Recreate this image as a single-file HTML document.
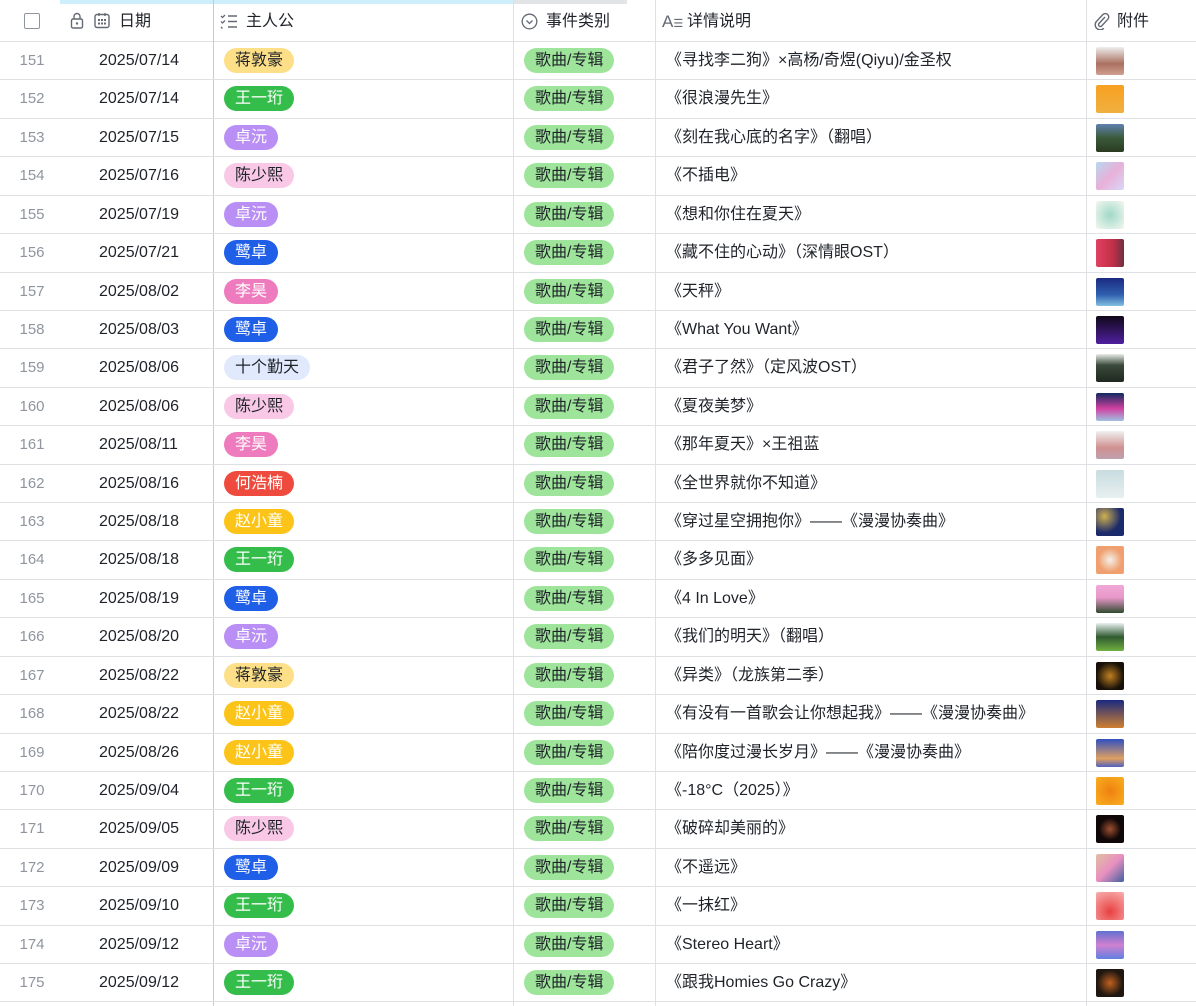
<!DOCTYPE html>
<html><head><meta charset="utf-8"><style>
*{margin:0;padding:0;box-sizing:border-box}
body{width:1196px;height:1006px;overflow:hidden;background:#fff;font-family:"Liberation Sans","Noto Sans CJK SC",sans-serif;color:#1f2329;font-size:16px;position:relative}
.top1{position:absolute;left:60px;top:0;width:453px;height:4px;background:#cdeefb}
.top2{position:absolute;left:513px;top:0;width:114px;height:4px;background:#e3e4e6}
.hdr{position:absolute;left:0;top:0;width:1196px;height:42px;border-bottom:1px solid #dee0e3}
.vl{position:absolute;top:0;height:1006px;width:1px;background:#dee0e3}
.row{position:absolute;left:0;width:1196px;height:38.42px;border-bottom:1px solid #dee0e3}
.n{position:absolute;left:0;width:64px;text-align:center;color:#8f959e;top:0;line-height:37px;font-size:15px}
.d{position:absolute;left:99px;top:0;line-height:37px}
.t{position:absolute;top:6px;height:25px;line-height:25px;border-radius:13px;padding:0 11px;font-size:16px}
.c{left:524px;background:#9ee59b;color:#1f2329}
.p{left:224px}
.x{position:absolute;left:666px;top:0;line-height:37px}
.im{position:absolute;left:1096px;top:5px;width:28px;height:28px;border-radius:2px}
.h{position:absolute;top:2px;line-height:40px;font-size:16px;color:#1f2329}
</style></head><body>
<div class="top1"></div><div class="top2"></div>
<div class="hdr">
<div style="position:absolute;left:24px;top:13px;width:16px;height:16px;border:1.5px solid #8f959e;border-radius:2px"></div>
<svg style="position:absolute;left:70px;top:12px" width="14" height="18" viewBox="0 0 14 18"><rect x="1.5" y="7" width="11" height="9" rx="1.5" fill="none" stroke="#646a73" stroke-width="1.4"/><path d="M4 7V4.5a3 3 0 0 1 6 0V7" fill="none" stroke="#646a73" stroke-width="1.4"/><circle cx="7" cy="11.5" r="1.2" fill="#646a73"/></svg>
<svg style="position:absolute;left:94px;top:12px" width="16" height="17" viewBox="0 0 16 17"><rect x="1" y="2.5" width="14" height="13" rx="2" fill="none" stroke="#646a73" stroke-width="1.4"/><path d="M5 1v3M11 1v3" stroke="#646a73" stroke-width="1.4"/><g fill="#646a73"><rect x="4" y="7" width="2" height="2"/><rect x="7" y="7" width="2" height="2"/><rect x="10" y="7" width="2" height="2"/><rect x="4" y="10.5" width="2" height="2"/><rect x="7" y="10.5" width="2" height="2"/><rect x="10" y="10.5" width="2" height="2"/></g></svg>
<div class="h" style="left:119px">日期</div>
<svg style="position:absolute;left:220px;top:13px" width="18" height="16" viewBox="0 0 18 16"><path d="M1 3l1.5 1.5L5 2M1 8.5l1.5 1.5L5 7.5M1 14l1.5 1.5" fill="none" stroke="#646a73" stroke-width="1.3"/><path d="M8 3h9M8 8.5h9M8 14h9" stroke="#646a73" stroke-width="1.5"/></svg>
<div class="h" style="left:246px">主人公</div>
<svg style="position:absolute;left:521px;top:13px" width="17" height="17" viewBox="0 0 17 17"><circle cx="8.5" cy="8.5" r="7.3" fill="none" stroke="#646a73" stroke-width="1.3"/><path d="M5.5 7.5l3 3 3-3" fill="none" stroke="#646a73" stroke-width="1.3"/></svg>
<div class="h" style="left:546px">事件类别</div>
<div class="h" style="left:662px;color:#646a73;font-size:17px">A<span style="font-size:11px">☰</span></div>
<div class="h" style="left:687px">详情说明</div>
<svg style="position:absolute;left:1094px;top:12px" width="16" height="18" viewBox="0 0 16 18"><path d="M11 5l-6 6.5a1.8 1.8 0 0 0 2.6 2.5l6.2-6.7a3.4 3.4 0 0 0-5-4.7L2.6 9.3a5 5 0 0 0 7.2 7" fill="none" stroke="#646a73" stroke-width="1.4"/></svg>
<div class="h" style="left:1117px">附件</div>
</div>
<div class="vl" style="left:213px;background:#c8cacd"></div>
<div class="vl" style="left:513px"></div>
<div class="vl" style="left:655px"></div>
<div class="vl" style="left:1086px"></div>

<div class="row" style="top:42px"><div class="n">151</div><div class="d">2025/07/14</div><div class="t p" style="background:#fddf87">蒋敦豪</div><div class="t c">歌曲/专辑</div><div class="x">《寻找李二狗》×高杨/奇煜(Qiyu)/金圣权</div><div class="im" style="background:linear-gradient(#eee,#aa7060 60%,#d0a090)"></div></div>
<div class="row" style="top:80.42px"><div class="n">152</div><div class="d">2025/07/14</div><div class="t p" style="background:#35bd4b;color:#fff">王一珩</div><div class="t c">歌曲/专辑</div><div class="x">《很浪漫先生》</div><div class="im" style="background:linear-gradient(#f8a020,#f0b040)"></div></div>
<div class="row" style="top:118.84px"><div class="n">153</div><div class="d">2025/07/15</div><div class="t p" style="background:#b98ef5;color:#fff">卓沅</div><div class="t c">歌曲/专辑</div><div class="x">《刻在我心底的名字》（翻唱）</div><div class="im" style="background:linear-gradient(#6080b0,#3a5a3a 50%,#2a3a20)"></div></div>
<div class="row" style="top:157.26px"><div class="n">154</div><div class="d">2025/07/16</div><div class="t p" style="background:#f8c8e6">陈少熙</div><div class="t c">歌曲/专辑</div><div class="x">《不插电》</div><div class="im" style="background:linear-gradient(135deg,#b8d8f0,#e8b0d8 50%,#d8d8f8)"></div></div>
<div class="row" style="top:195.68px"><div class="n">155</div><div class="d">2025/07/19</div><div class="t p" style="background:#b98ef5;color:#fff">卓沅</div><div class="t c">歌曲/专辑</div><div class="x">《想和你住在夏天》</div><div class="im" style="background:radial-gradient(#a0d8c8,#f4f8f0)"></div></div>
<div class="row" style="top:234.1px"><div class="n">156</div><div class="d">2025/07/21</div><div class="t p" style="background:#1f5fe8;color:#fff">鹭卓</div><div class="t c">歌曲/专辑</div><div class="x">《藏不住的心动》（深情眼OST）</div><div class="im" style="background:linear-gradient(90deg,#e04060,#c03048 60%,#703040)"></div></div>
<div class="row" style="top:272.52px"><div class="n">157</div><div class="d">2025/08/02</div><div class="t p" style="background:#ee7bbd;color:#fff">李昊</div><div class="t c">歌曲/专辑</div><div class="x">《天秤》</div><div class="im" style="background:linear-gradient(#1a2a80,#3060b0 60%,#80c0e0)"></div></div>
<div class="row" style="top:310.94px"><div class="n">158</div><div class="d">2025/08/03</div><div class="t p" style="background:#1f5fe8;color:#fff">鹭卓</div><div class="t c">歌曲/专辑</div><div class="x">《What You Want》</div><div class="im" style="background:linear-gradient(#100818,#5020a0)"></div></div>
<div class="row" style="top:349.36px"><div class="n">159</div><div class="d">2025/08/06</div><div class="t p" style="background:#e1e9fd">十个勤天</div><div class="t c">歌曲/专辑</div><div class="x">《君子了然》（定风波OST）</div><div class="im" style="background:linear-gradient(#e8ece8,#3a4a3a 40%,#202820)"></div></div>
<div class="row" style="top:387.78px"><div class="n">160</div><div class="d">2025/08/06</div><div class="t p" style="background:#f8c8e6">陈少熙</div><div class="t c">歌曲/专辑</div><div class="x">《夏夜美梦》</div><div class="im" style="background:linear-gradient(#102a60,#d040a0 55%,#a0c0e0)"></div></div>
<div class="row" style="top:426.2px"><div class="n">161</div><div class="d">2025/08/11</div><div class="t p" style="background:#ee7bbd;color:#fff">李昊</div><div class="t c">歌曲/专辑</div><div class="x">《那年夏天》×王祖蓝</div><div class="im" style="background:linear-gradient(#f0f0f0,#d09090 60%,#c0a0b0)"></div></div>
<div class="row" style="top:464.62px"><div class="n">162</div><div class="d">2025/08/16</div><div class="t p" style="background:#ee4b3e;color:#fff">何浩楠</div><div class="t c">歌曲/专辑</div><div class="x">《全世界就你不知道》</div><div class="im" style="background:linear-gradient(#c8dce0,#e8f0f0)"></div></div>
<div class="row" style="top:503.04px"><div class="n">163</div><div class="d">2025/08/18</div><div class="t p" style="background:#fcc419;color:#fff">赵小童</div><div class="t c">歌曲/专辑</div><div class="x">《穿过星空拥抱你》——《漫漫协奏曲》</div><div class="im" style="background:radial-gradient(circle at 30% 30%,#d0b050,#1a2a6a 60%)"></div></div>
<div class="row" style="top:541.46px"><div class="n">164</div><div class="d">2025/08/18</div><div class="t p" style="background:#35bd4b;color:#fff">王一珩</div><div class="t c">歌曲/专辑</div><div class="x">《多多见面》</div><div class="im" style="background:radial-gradient(#f4f0ea,#f0a070 60%)"></div></div>
<div class="row" style="top:579.88px"><div class="n">165</div><div class="d">2025/08/19</div><div class="t p" style="background:#1f5fe8;color:#fff">鹭卓</div><div class="t c">歌曲/专辑</div><div class="x">《4 In Love》</div><div class="im" style="background:linear-gradient(#f0a8d8,#e898c8 45%,#304a30)"></div></div>
<div class="row" style="top:618.3px"><div class="n">166</div><div class="d">2025/08/20</div><div class="t p" style="background:#b98ef5;color:#fff">卓沅</div><div class="t c">歌曲/专辑</div><div class="x">《我们的明天》（翻唱）</div><div class="im" style="background:linear-gradient(#e8f0f0,#305a30 50%,#70b040)"></div></div>
<div class="row" style="top:656.72px"><div class="n">167</div><div class="d">2025/08/22</div><div class="t p" style="background:#fddf87">蒋敦豪</div><div class="t c">歌曲/专辑</div><div class="x">《异类》（龙族第二季）</div><div class="im" style="background:radial-gradient(#c08020,#181008 70%)"></div></div>
<div class="row" style="top:695.14px"><div class="n">168</div><div class="d">2025/08/22</div><div class="t p" style="background:#fcc419;color:#fff">赵小童</div><div class="t c">歌曲/专辑</div><div class="x">《有没有一首歌会让你想起我》——《漫漫协奏曲》</div><div class="im" style="background:linear-gradient(#1a2a80,#d08030)"></div></div>
<div class="row" style="top:733.56px"><div class="n">169</div><div class="d">2025/08/26</div><div class="t p" style="background:#fcc419;color:#fff">赵小童</div><div class="t c">歌曲/专辑</div><div class="x">《陪你度过漫长岁月》——《漫漫协奏曲》</div><div class="im" style="background:linear-gradient(#3050c0,#e0a060 70%,#5060c0)"></div></div>
<div class="row" style="top:771.98px"><div class="n">170</div><div class="d">2025/09/04</div><div class="t p" style="background:#35bd4b;color:#fff">王一珩</div><div class="t c">歌曲/专辑</div><div class="x">《-18°C（2025）》</div><div class="im" style="background:radial-gradient(#f08010,#f8b020)"></div></div>
<div class="row" style="top:810.4px"><div class="n">171</div><div class="d">2025/09/05</div><div class="t p" style="background:#f8c8e6">陈少熙</div><div class="t c">歌曲/专辑</div><div class="x">《破碎却美丽的》</div><div class="im" style="background:radial-gradient(#a05030,#100808 55%)"></div></div>
<div class="row" style="top:848.82px"><div class="n">172</div><div class="d">2025/09/09</div><div class="t p" style="background:#1f5fe8;color:#fff">鹭卓</div><div class="t c">歌曲/专辑</div><div class="x">《不遥远》</div><div class="im" style="background:linear-gradient(135deg,#e0c0a0,#e890c0 50%,#4060a0)"></div></div>
<div class="row" style="top:887.24px"><div class="n">173</div><div class="d">2025/09/10</div><div class="t p" style="background:#35bd4b;color:#fff">王一珩</div><div class="t c">歌曲/专辑</div><div class="x">《一抹红》</div><div class="im" style="background:radial-gradient(circle at 50% 70%,#e84040,#f8b0b0)"></div></div>
<div class="row" style="top:925.66px"><div class="n">174</div><div class="d">2025/09/12</div><div class="t p" style="background:#b98ef5;color:#fff">卓沅</div><div class="t c">歌曲/专辑</div><div class="x">《Stereo Heart》</div><div class="im" style="background:linear-gradient(#6070d0,#d080d0 50%,#6080e0)"></div></div>
<div class="row" style="top:964.08px"><div class="n">175</div><div class="d">2025/09/12</div><div class="t p" style="background:#35bd4b;color:#fff">王一珩</div><div class="t c">歌曲/专辑</div><div class="x">《跟我Homies Go Crazy》</div><div class="im" style="background:radial-gradient(#c06020,#201810 65%)"></div></div>
</body></html>
